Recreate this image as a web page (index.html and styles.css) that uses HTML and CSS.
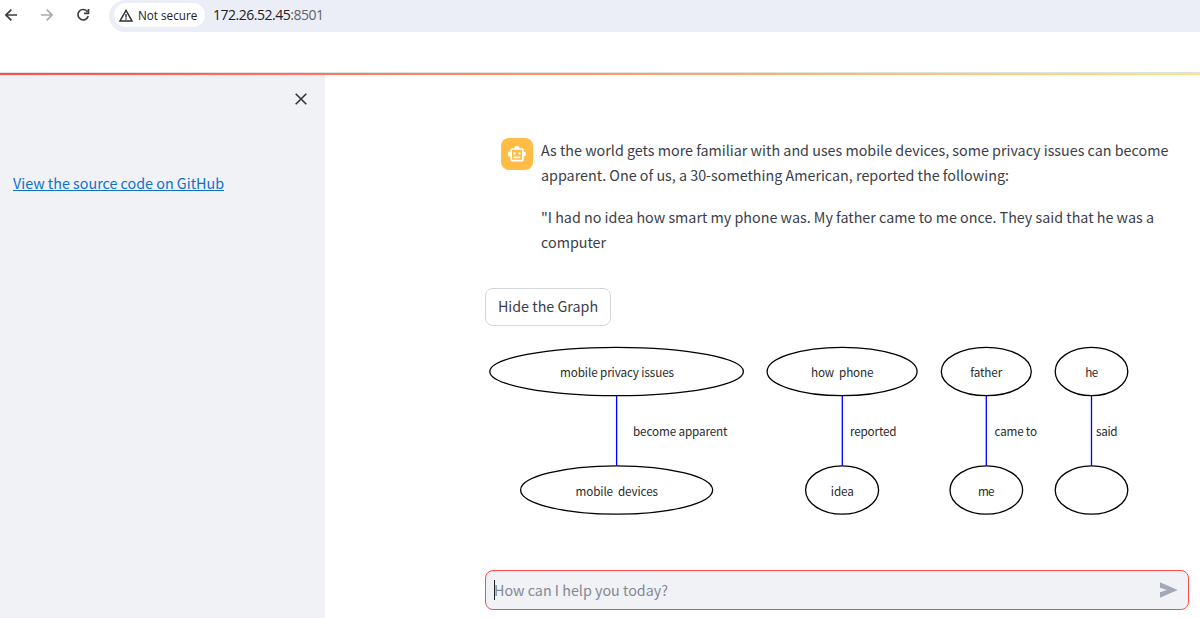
FILE: index.html
```html
<!DOCTYPE html>
<html lang="en">
<head>
<meta charset="utf-8">
<title>Chat</title>
<link rel="stylesheet" href="styles.css">
</head>
<body>
<header class="toolbar">
  <svg class="nav" width="109" height="32" viewBox="0 0 109 32" fill="none" stroke-width="1.7">
    <path stroke="#3c3d40" d="M17 15H6M11.300 9.600L5.900 15l5.400 5.400"/>
    <path stroke="#a9aaac" d="M41 15h11M46.700 9.600l5.400 5.400-5.400 5.400"/>
    <path stroke="#3c3d40" d="M87.400 11.700A5.200 5.200 0 1 0 88.200 16M88.500 9v4.300h-4.500"/>
  </svg>
  <div class="address">
    <div class="chip">
      <svg width="14" height="13" viewBox="0 0 14 13"><path d="M7 1.400L13 11.900H1z" fill="none" stroke="#303134" stroke-width="1.500"/><path d="M7 5v3.400M7 9.300v1.400" stroke="#303134" stroke-width="1.400"/></svg>
      <span class="chip-text">Not secure</span>
    </div>
    <span class="url">172.26.52.45<span class="port">:8501</span></span>
  </div>
</header>
<div class="bookmarks"></div>
<div class="decoration"></div>
<div class="app">
  <aside class="sidebar">
    <div class="sidebar-head">
      <svg width="12" height="12" viewBox="0 0 12 12"><path d="M.7.7l10.600 10.600M11.300.7L.7 11.300" stroke="#31333f" stroke-width="1.600"/></svg>
    </div>
    <a class="source" href="#">View the source code on GitHub</a>
  </aside>
  <main class="main">
    <section class="message">
      <div class="avatar">
        <svg width="20" height="20" viewBox="0 0 24 24" fill="#fff"><path d="M20 9V7c0-1.100-.9-2-2-2h-3c0-1.660-1.340-3-3-3S9 3.340 9 5H6c-1.100 0-2 .9-2 2v2c-1.660 0-3 1.340-3 3s1.340 3 3 3v4c0 1.100.9 2 2 2h12c1.100 0 2-.9 2-2v-4c1.660 0 3-1.340 3-3s-1.340-3-3-3zm-2 10H6V7h12v12zm-9-6c-.83 0-1.500-.67-1.500-1.500S8.170 10 9 10s1.500.67 1.500 1.500S9.830 13 9 13zm7.500-1.500c0 .83-.67 1.500-1.500 1.500s-1.500-.67-1.500-1.500.67-1.500 1.500-1.500 1.500.67 1.500 1.500zM8 15h8v2H8v-2z"/></svg>
      </div>
      <div class="text">
        <p>As the world gets more familiar with and uses mobile devices, some privacy issues can become<br>apparent. One of us, a 30-something American, reported the following:</p>
        <p>"I had no idea how smart my phone was. My father came to me once. They said that he was a<br>computer</p>
      </div>
    </section>
    <button class="toggle">Hide the Graph</button>
    <svg class="graph" width="660" height="180" viewBox="485 340 660 180">
      <g class="edges">
        <path d="M616.600 395.500v70M842.300 395.500v70M986.300 395.500v70M1091.500 395.500v70"/>
      </g>
      <g class="nodes">
        <ellipse cx="616.600" cy="371.500" rx="126.800" ry="24.200"/>
        <ellipse cx="842.100" cy="371.500" rx="75" ry="24.200"/>
        <ellipse cx="986.300" cy="371.500" rx="45" ry="24.200"/>
        <ellipse cx="1091.500" cy="371.500" rx="36.300" ry="24.200"/>
        <ellipse cx="616.600" cy="490" rx="96" ry="24.200"/>
        <ellipse cx="842.100" cy="490" rx="36.500" ry="24.200"/>
        <ellipse cx="986.300" cy="490" rx="36.300" ry="24.200"/>
        <ellipse cx="1091.500" cy="490" rx="36.300" ry="24.200"/>
      </g>
      <g class="labels">
        <text x="560" y="377.300" textLength="114">mobile privacy issues</text>
        <text x="811" y="377.300" textLength="62.500">how&#160; phone</text>
        <text x="970.300" y="377.300" textLength="32">father</text>
        <text x="1085.200" y="377.300" textLength="13">he</text>
        <text x="633" y="436.300" textLength="94.500">become apparent</text>
        <text x="850" y="436.300" textLength="46.500">reported</text>
        <text x="994.500" y="436.300" textLength="42.500">came to</text>
        <text x="1096" y="436.300" textLength="21.500">said</text>
        <text x="575.500" y="496" textLength="82.500">mobile&#160; devices</text>
        <text x="830.800" y="496" textLength="23">idea</text>
        <text x="978" y="496" textLength="16.500">me</text>
      </g>
    </svg>
    <div class="prompt">
      <span class="caret"></span>
      <span class="placeholder">How can I help you today?</span>
      <svg width="18" height="16" viewBox="0 0 18 16" fill="#a3a8b8"><path d="M0 .3L17.700 8 0 15.700V10.300L7 8 0 5.700z"/></svg>
    </div>
  </main>
</div>
</body>
</html>
```
FILE: styles.css
```css
* { box-sizing: border-box; }
body { margin: 0; height: 618px; overflow: hidden; display: flex; flex-direction: column; background: #fff; color: #3b3d48; font: 14.320px/25px "Noto Sans CJK SC", "Noto Sans", sans-serif; }
.toolbar { display: flex; height: 32px; flex: none; }
.nav { flex: none; }
.address { flex: 1; display: flex; align-items: flex-start; background: #ebeef7; border-radius: 16px 0 0 16px; padding: 3px 0 0 5px; }
.chip { display: flex; align-items: center; width: 91px; height: 24px; padding-left: 5px; gap: 5px; background: #fff; border-radius: 12px; }
.chip-text { font: 11.700px/24px "Open Sans", sans-serif; color: #202124; white-space: nowrap; }
.url { margin-left: 8px; font: 14px/24px "Open Sans", sans-serif; letter-spacing: -0.480px; color: #202124; }
.port { color: #5f6368; }
.bookmarks { height: 41px; flex: none; border-bottom: 1px solid #dfe1e5; }
.decoration { height: 2px; flex: none; background: linear-gradient(90deg, #ff4b4b, #ffe77e); }
.app { flex: 1; display: flex; min-height: 0; }
.sidebar { width: 325px; flex: none; background: #f0f2f6; padding: 18px 18px 0 13px; }
.sidebar-head { display: flex; justify-content: flex-end; height: 77px; }
.source { color: #0f70cc; text-decoration: underline; white-space: nowrap; }
.main { flex: 1; padding: 63px 11px 8px 160px; display: flex; flex-direction: column; align-items: flex-start; }
.message { display: flex; gap: 8px; padding-left: 16px; }
.avatar { width: 32px; height: 32px; flex: none; display: flex; align-items: center; justify-content: center; background: #ffbd45; border-radius: 8px; }
.text { white-space: nowrap; margin-top: -1px; }
.text p { margin: 0 0 17px; }
.toggle { margin-top: 17px; width: 126px; height: 38px; padding: 0 0 3px; flex: none; border: 1px solid #d5d6d9; border-radius: 8px; background: #fff; color: #3b3d48; font: inherit; white-space: nowrap; }
.graph { margin-top: 14px; flex: none; }
.edges { stroke: #00f; stroke-width: 1.300; }
.nodes { fill: none; stroke: #000; stroke-width: 1.300; }
.labels { font-size: 11.700px; fill: #2a2a2a; }
.prompt { width: 704px; height: 40px; margin-top: auto; display: flex; align-items: center; padding: 0 10px 0 8px; background: #f0f2f6; border: 1px solid #ff4b4b; border-radius: 8px; }
.caret { width: 1px; height: 20px; margin-right: -1px; background: #222; }
.placeholder { flex: 1; margin-top: -2px; color: #858793; }
```
